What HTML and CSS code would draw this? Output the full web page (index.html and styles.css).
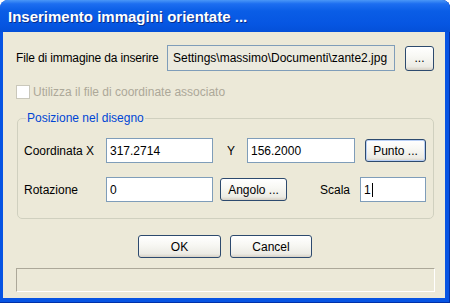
FILE: index.html
```html
<!DOCTYPE html>
<html lang="it">
<head>
    <meta charset="UTF-8">
    <title>Inserimento immagini orientate ...</title>
    <link rel="stylesheet" href="styles.css">
</head>
<body>
    <div class="window">
        <div class="titlebar">
            <span class="title">Inserimento immagini orientate ...</span>
        </div>
        <div class="client">
            <div class="file-row">
                <span class="file-label">File di immagine da inserire</span>
                <div class="field readonly">Settings\massimo\Documenti\zante2.jpg</div>
                <button class="btn btn-browse">...</button>
            </div>
            <div class="check-row">
                <span class="checkbox"></span>
                <span>Utilizza il file di coordinate associato</span>
            </div>
            <fieldset class="group">
                <legend>Posizione nel disegno</legend>
                <div class="group-row">
                    <span class="row-label">Coordinata X</span>
                    <div class="field field-x">317.2714</div>
                    <span class="y-label">Y</span>
                    <div class="field field-y">156.2000</div>
                    <button class="btn btn-punto">Punto ...</button>
                </div>
                <div class="group-row">
                    <span class="row-label">Rotazione</span>
                    <div class="field field-rot">0</div>
                    <button class="btn btn-angolo">Angolo ...</button>
                    <span class="scala-label">Scala</span>
                    <div class="field field-scala">1<span class="caret"></span></div>
                </div>
            </fieldset>
            <div class="actions">
                <button class="btn btn-ok">OK</button>
                <button class="btn btn-cancel">Cancel</button>
            </div>
            <div class="statusbar"></div>
        </div>
    </div>
</body>
</html>
```

FILE: styles.css
```css
body {
    margin: 0;
    background-color: #fff;
    font-family: "Liberation Sans", Arial, sans-serif;
    font-size: 12px;
    color: #000;
}
.window {
    width: 450px;
    height: 303px;
    display: flex;
    flex-direction: column;
    background-color: #0754e3;
    border-radius: 8px 8px 0 0;
    box-shadow: inset -1px 0 0 #0030a8, inset 0 -1px 0 #0030a8;
}
.titlebar {
    height: 32px;
    display: flex;
    align-items: center;
    padding-left: 8px;
    border-radius: 8px 8px 0 0;
    background: linear-gradient(#4a97f7 0%, #1d6ef0 12%, #0a5de6 35%, #0656e2 75%, #0450d8 100%);
}
.title {
    color: #fff;
    font-weight: bold;
    font-size: 15px;
    text-shadow: 1px 1px 0 #0a2f8a;
}
.client {
    flex: 1;
    margin: 0 5px 5px 3px;
    padding: 13px 11px 0 13px;
    background-color: #ece9d8;
}
.file-row {
    display: flex;
    align-items: center;
    height: 26px;
}
.file-label {
    width: 151px;
    letter-spacing: -0.15px;
}
.field {
    height: 25px;
    box-sizing: border-box;
    border: 1px solid #7f9db9;
    background-color: #fff;
    padding: 0 3px;
    display: flex;
    align-items: center;
    white-space: nowrap;
    overflow: hidden;
}
.field.readonly {
    width: 228px;
    height: 26px;
    background-color: #ebeadf;
    padding-left: 5px;
}
.btn {
    font-family: inherit;
    font-size: 12px;
    color: #000;
    box-sizing: border-box;
    height: 23px;
    padding: 0;
    border: 1px solid #2d4a6e;
    border-radius: 3px;
    background: linear-gradient(#ffffff 0%, #f8f8f4 40%, #ecebe4 85%, #d6d0c5 100%);
}
.btn-browse {
    width: 29px;
    height: 25px;
    margin-left: 10px;
}
.check-row {
    display: flex;
    align-items: center;
    margin-top: 14px;
    color: #aca899;
}
.checkbox {
    width: 12px;
    height: 12px;
    margin-right: 3px;
    border: 1px solid #cac8bb;
    background-color: #fff;
}
.group {
    margin: 12px 0 0 1px;
    padding: 13px 0 16px 6px;
    border: 1px solid #d0d0bf;
    border-radius: 5px;
}
.group legend {
    color: #0046d5;
    padding: 0 1px;
    margin-left: 2px;
}
.group-row {
    display: flex;
    align-items: center;
    height: 25px;
}
.group-row + .group-row {
    margin-top: 14px;
}
.row-label {
    width: 82px;
}
.field-x, .field-rot {
    width: 107px;
}
.y-label {
    width: 20px;
    padding-left: 14px;
}
.field-y {
    width: 108px;
}
.btn-punto {
    width: 61px;
    margin-left: 10px;
    box-shadow: inset 0 0 0 1px #b8cff5;
}
.btn-angolo {
    width: 67px;
    margin-left: 7px;
}
.scala-label {
    width: 40px;
    padding-left: 33px;
}
.field-scala {
    width: 66px;
}
.caret {
    display: inline-block;
    width: 1px;
    height: 14px;
    background-color: #000;
    margin-left: 1px;
}
.actions {
    display: flex;
    justify-content: center;
    gap: 9px;
    margin-top: 16px;
}
.btn-ok {
    width: 83px;
}
.btn-cancel {
    width: 82px;
}
.statusbar {
    height: 24px;
    margin-top: 10px;
    box-sizing: border-box;
    border: 1px solid;
    border-color: #aca899 #fff #fff #aca899;
    margin-right: -1px;
}
```
